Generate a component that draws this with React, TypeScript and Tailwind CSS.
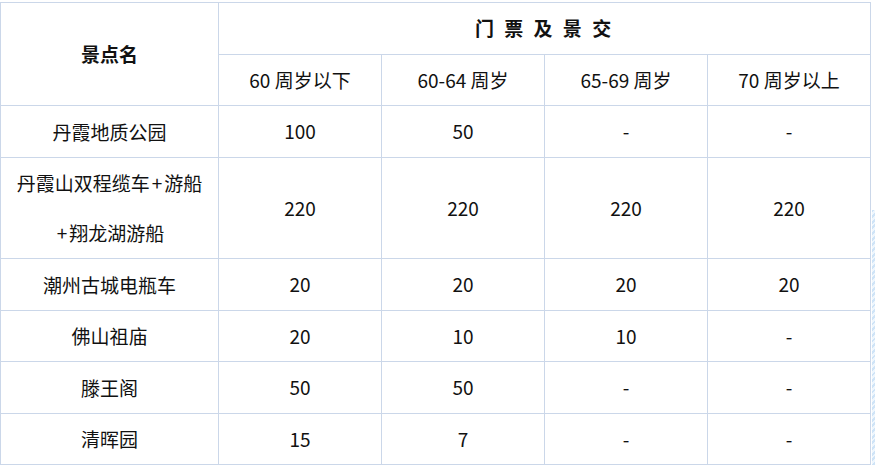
const AGES = ['60 周岁以下', '60-64 周岁', '65-69 周岁', '70 周岁以上']

type Row = { name: string[]; prices: string[]; h: string }

const ROWS: Row[] = [
  { name: ['丹霞地质公园'], prices: ['100', '50', '-', '-'], h: 'h-[52px]' },
  { name: ['丹霞山双程缆车+游船', '+翔龙湖游船'], prices: ['220', '220', '220', '220'], h: 'h-[101px]' },
  { name: ['潮州古城电瓶车'], prices: ['20', '20', '20', '20'], h: 'h-[52px]' },
  { name: ['佛山祖庙'], prices: ['20', '10', '10', '-'], h: 'h-[51px]' },
  { name: ['滕王阁'], prices: ['50', '50', '-', '-'], h: 'h-[52px]' },
  { name: ['清晖园'], prices: ['15', '7', '-', '-'], h: 'h-[50px]' },
]

const cell = 'border border-[#cbd7e9] text-center align-middle p-0'

// the plus sign sits a little wider in the original font
function Name({ text }: { text: string }) {
  const parts = text.split('+')
  return (
    <div>
      {parts.map((p, i) => (
        <span key={i}>
          {i > 0 && <span className="mx-[2px]">+</span>}
          {p}
        </span>
      ))}
    </div>
  )
}

export default function App() {
  return (
    <div
      className="flex w-[875px] h-[465px] overflow-hidden bg-white pt-[2px] text-[19px] text-[#111111]"
      style={{ fontFamily: '"Noto Sans CJK SC", "Noto Sans", sans-serif' }}
    >
      <table className="table-fixed border-collapse w-[870px] shrink-0 self-start">
        <colgroup>
          <col className="w-[218px]" />
          <col className="w-[163px]" />
          <col className="w-[163px]" />
          <col className="w-[163px]" />
          <col className="w-[163px]" />
        </colgroup>
        <thead>
          <tr className="h-[52px]">
            <th rowSpan={2} className={`${cell} font-bold`}>景点名</th>
            <th colSpan={4} className={`${cell} font-bold tracking-[3px]`}>门 票 及 景 交</th>
          </tr>
          <tr className="h-[51px]">
            {AGES.map(a => (
              <td key={a} className={`${cell} font-normal`}>{a}</td>
            ))}
          </tr>
        </thead>
        <tbody>
          {ROWS.map(r => (
            <tr key={r.name.join('')} className={r.h}>
              <td className={`${cell} leading-[50px]`}>
                {r.name.map(n => (
                  <Name key={n} text={n} />
                ))}
              </td>
              {r.prices.map((p, i) => (
                <td key={i} className={cell}>{p}</td>
              ))}
            </tr>
          ))}
        </tbody>
      </table>

      {/* decorative hatch strip at the right edge */}
      <div
        className="w-[5px] mt-[208px] h-[257px] shrink-0 ml-[1px]"
        style={{
          backgroundImage:
            'repeating-linear-gradient(135deg, #cfe4f7 0px, #cfe4f7 2px, #eef6fd 2px, #eef6fd 4px)',
        }}
      />
    </div>
  )
}
